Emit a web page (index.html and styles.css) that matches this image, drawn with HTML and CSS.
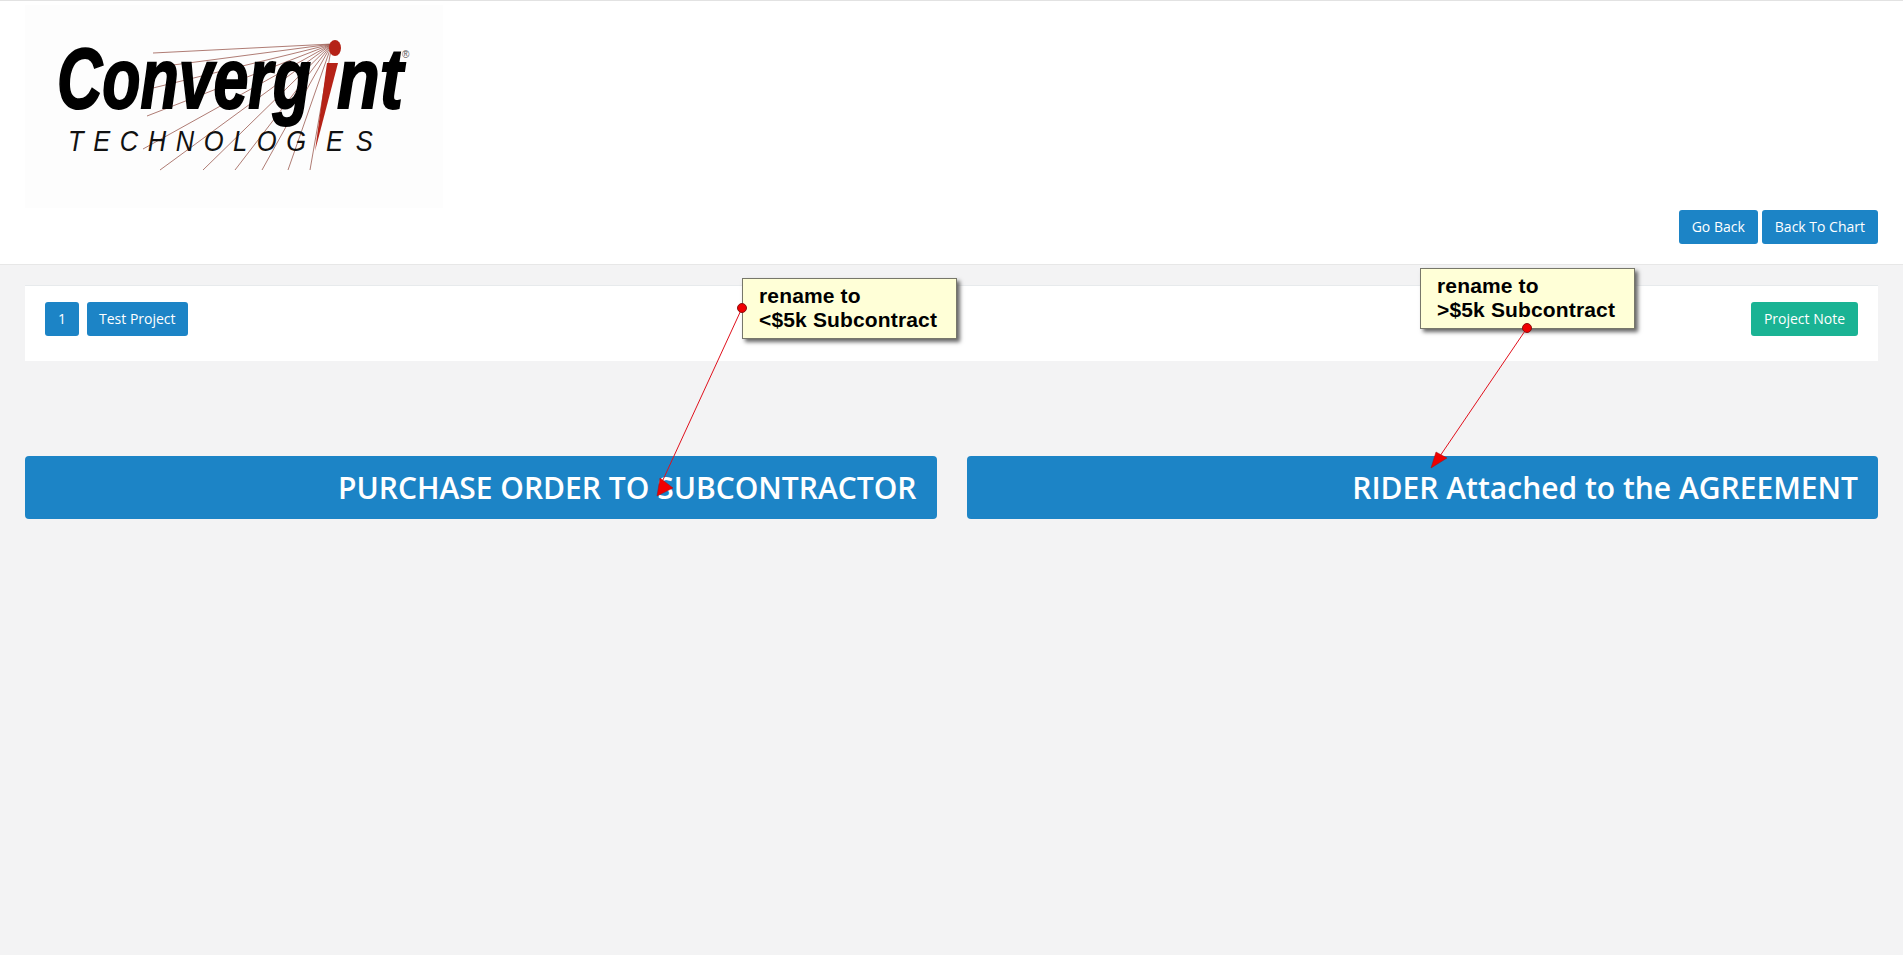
FILE: index.html
```html
<!DOCTYPE html>
<html lang="en">
<head>
  <meta charset="UTF-8" />
  <title>Convergint Technologies - Subcontract Documents</title>
  <link rel="stylesheet" href="styles.css">
</head>
<body>
  <header class="top-bar">
    <svg class="logo" viewBox="25 5 418 203" role="img" aria-label="Convergint Technologies">
      <rect x="25" y="5" width="418" height="203" fill="#fdfdfd"/>
      <g class="logo-rays">
        <path d="M332 44L153 53M332 44L173 65M332 44L153 88M332 44L147 116M332 44L143 149"/>
        <path d="M332 44L160 170M332 44L203 170M332 44L235 170M332 44L262 170M332 44L288 170M332 44L310 170"/>
      </g>
      <text class="logo-word" x="57" y="108" textLength="254" lengthAdjust="spacingAndGlyphs">Converg</text>
      <text class="logo-word" x="337" y="108" textLength="66" lengthAdjust="spacingAndGlyphs">nt</text>
      <text class="logo-reg" x="402" y="58">®</text>
      <text class="logo-sub" transform="translate(68 151) scale(.85 1)" textLength="280">TECHNOLOG</text>
      <text class="logo-sub" transform="translate(326 151) scale(.85 1)" textLength="55">ES</text>
      <ellipse cx="335" cy="48" rx="6" ry="8" fill="#b52217"/>
      <path d="M327 63L338 63L315 151Z" fill="#b52217"/>
    </svg>
    <div class="btn-row">
      <a class="btn btn-blue">Go Back</a>
      <a class="btn btn-blue">Back To Chart</a>
    </div>
  </header>

  <section class="project-box">
    <div class="btn-row btn-row-wide">
      <a class="btn btn-blue">1</a>
      <a class="btn btn-blue btn-tight">Test Project</a>
    </div>
    <a class="btn btn-green">Project Note</a>
  </section>

  <div class="doc-links">
    <a class="doc-link">PURCHASE ORDER TO SUBCONTRACTOR</a>
    <a class="doc-link">RIDER Attached to the AGREEMENT</a>
  </div>

  <!-- review notes pasted over the page -->
  <div class="note note-left">rename to<br>&lt;$5k Subcontract</div>
  <div class="note note-right">rename to<br>&gt;$5k Subcontract</div>
  <svg class="arrows" width="1903" height="955" viewBox="0 0 1903 955">
    <path d="M742 308L662 482M1527 328L1440 456" stroke="#e0101c" stroke-width="1" fill="none"/>
    <path d="M657 496L660 478L673 488Z" fill="#f00000" stroke="#a01010" stroke-width="0.5"/>
    <path d="M1431 468L1436 452L1447 458Z" fill="#f00000" stroke="#a01010" stroke-width="0.5"/>
    <circle cx="742" cy="308" r="4.5" fill="#f00000" stroke="#8a1010" stroke-width="1"/>
    <circle cx="1527" cy="328" r="4.5" fill="#f00000" stroke="#8a1010" stroke-width="1"/>
  </svg>
</body>
</html>
```

FILE: styles.css
```css
body {
  font-family: 'Open Sans', sans-serif;
  background: #f3f3f4;
  color: #676a6c;
  margin: 0;
  height: 955px;
  overflow: hidden;
  position: relative;
}

.top-bar {
  box-sizing: border-box;
  height: 265px;
  background: #fff;
  border-top: 1px solid #e2e2e2;
  border-bottom: 1px solid #e7e7e7;
  padding: 4px 25px 20px;
  display: flex;
  justify-content: space-between;
  align-items: flex-end;
}

.logo {
  width: 418px;
  height: 203px;
  align-self: flex-start;
}

.logo-word {
  font-family: 'Liberation Sans', sans-serif;
  font-weight: bold;
  font-style: italic;
  font-size: 85px;
  fill: #000;
  stroke: #000;
  stroke-width: 2px;
}

.logo-sub {
  font-family: 'Liberation Sans', sans-serif;
  font-style: italic;
  font-size: 30px;
  fill: #111;
}

.logo-reg {
  font-family: 'Liberation Sans', sans-serif;
  font-size: 10px;
  fill: #555;
}

.logo-rays path {
  stroke: #9a5a50;
  stroke-width: 0.8;
  fill: none;
}

.btn-row {
  display: flex;
  gap: 4px;
}

.btn-row-wide {
  gap: 8px;
}

.btn {
  box-sizing: border-box;
  height: 34px;
  padding: 6px 13px;
  border-radius: 3px;
  font-size: 14px;
  line-height: 22px;
  color: #fff;
}

.btn-tight {
  padding: 6px 12px;
}

.btn-blue {
  background: #1c84c6;
}

.btn-green {
  background: #1ab394;
}

.project-box {
  background: #fff;
  border-top: 1px solid #e7eaec;
  margin: 20px 25px 0;
  padding: 16px 20px 25px;
  display: flex;
  justify-content: space-between;
}

.doc-links {
  display: grid;
  grid-template-columns: 1fr 1fr;
  gap: 30px;
  margin: 95px 25px 0;
}

.doc-link {
  height: 63px;
  background: #1c84c6;
  border-radius: 4px;
  padding-right: 20px;
  text-align: right;
  color: #fff;
  font-size: 30px;
  font-weight: 600;
  line-height: 63px;
}

.note {
  position: absolute;
  box-sizing: border-box;
  width: 215px;
  height: 61px;
  padding: 5px 0 0 16px;
  background: #ffffd7;
  border: 1px solid #77776a;
  box-shadow: 3px 3px 4px #666;
  color: #000;
  font-family: 'Liberation Sans', sans-serif;
  font-weight: bold;
  font-size: 21px;
  letter-spacing: 0.15px;
  line-height: 24px;
}

.note-left {
  left: 742px;
  top: 278px;
}

.note-right {
  left: 1420px;
  top: 268px;
}

.arrows {
  position: absolute;
  left: 0;
  top: 0;
  pointer-events: none;
}
```
